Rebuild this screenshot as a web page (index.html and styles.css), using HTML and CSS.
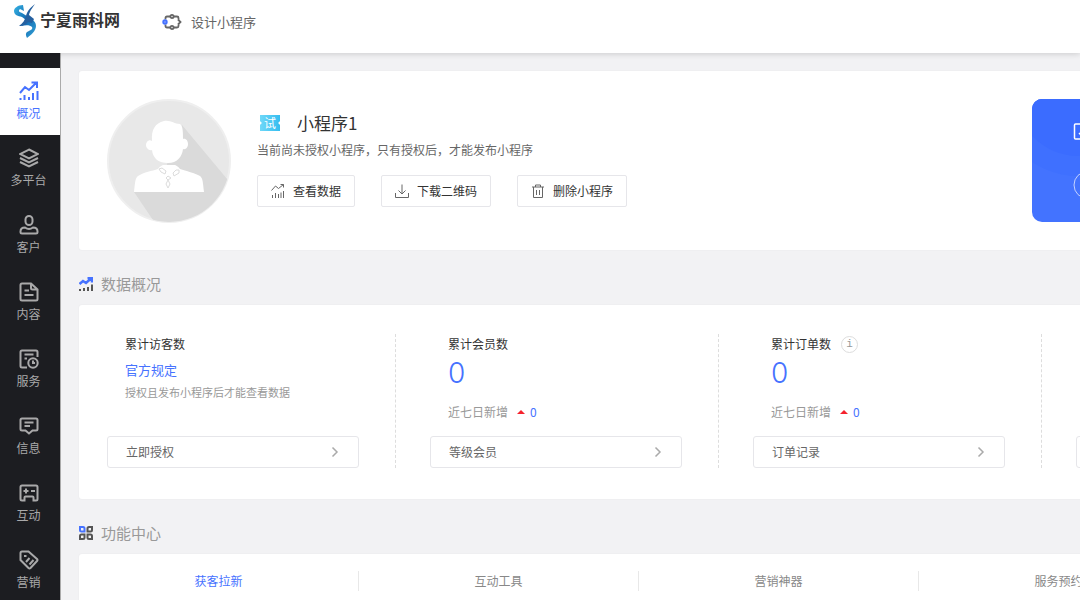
FILE: index.html
```html
<!DOCTYPE html>
<html lang="zh-CN">
<head>
<meta charset="utf-8">
<title>小程序概况</title>
<link rel="stylesheet" href="styles.css">
</head>
<body>
<div class="app">
  <header class="topbar">
    <a class="brand" href="#">
      <svg class="brand-mark" width="26" height="36" viewBox="0 0 26 36">
        <defs><linearGradient id="ribbon" x1="0" y1="0" x2="1" y2="1"><stop offset="0" stop-color="#36b4e4"/><stop offset=".5" stop-color="#1268b0"/><stop offset="1" stop-color="#35a5d8"/></linearGradient></defs>
        <path fill="url(#ribbon)" d="M10 1C5 1 1 4 1 7c0 4 4 5 8 6l4 3-5 6c5-1 9-1 11 1 1 2-1 3-3 4-3 1-4 3-2 7 4-3 9-7 9-12 0-4-3-6-6-8L9 9C6 8 5 7 7 5l4 2z"/>
        <path fill="#2560a0" d="M22 0c-1 2-5 6-6 11l5 4-2 4-4-1c-2 2-4 4-9 4 4-3 6-6 7-10C14 7 18 3 22 0z"/>
      </svg>
      <span class="brand-name">宁夏雨科网</span>
    </a>
    <a class="design-link" href="#">
      <svg width="20" height="16" viewBox="0 0 20 16" fill="none" stroke="#666" stroke-width="1.800">
        <path d="M3.500 5.500V4q0-1.500 1.500-1.500h3M12 2.500h3q1.500 0 1.500 1.500v1.500M16.500 10.500V12q0 1.500-1.500 1.500h-3M8 13.500H5Q3.500 13.500 3.500 12v-1.500"/>
        <circle cx="10" cy="2.500" r="1.600"/><circle cx="10" cy="13.500" r="1.600"/><path d="M16 5.500L18.500 8 16 10.500"/><circle cx="3" cy="8" r="1.800" stroke="#4672ff" fill="#7c9bff"/>
      </svg>
      <span>设计小程序</span>
    </a>
  </header>
  <div class="shell">
    <nav class="sidebar">
      <a class="nav-item active" href="#"><svg class="nav-icon" viewBox="0 0 20 20"><path d="M1 12l5-6 4 3 7-7M12.500 1.500H18V7M1.500 17v2M5.500 14v5M10 16v3M14 12v7M18.500 10v9"/></svg>概况</a>
      <a class="nav-item" href="#"><svg class="nav-icon" viewBox="0 0 20 20"><path d="M10 1.500l9 4.500-9 4.500L1 6zM1 10l9 4.500 9-4.500M1 14l9 4.500 9-4.500"/></svg>多平台</a>
      <a class="nav-item" href="#"><svg class="nav-icon" viewBox="0 0 20 20"><rect x="6.500" y="1" width="7" height="9" rx="3.500"/><path d="M6 12.500q4 3 8 0 4.500 0 4.500 4v.5q0 1.500-1.500 1.500H3q-1.500 0-1.500-1.500v-.5q0-4 4.500-4z"/></svg>客户</a>
      <a class="nav-item" href="#"><svg class="nav-icon" viewBox="0 0 20 20"><path d="M12 1.500H3Q1.500 1.500 1.500 3v14q0 1.500 1.500 1.500h14q1.500 0 1.500-1.500V7.500zM12 1.500V6q0 1.500 1.500 1.500h5M5.500 8.500H10M5.500 13h9"/></svg>内容</a>
      <a class="nav-item" href="#"><svg class="nav-icon" viewBox="0 0 20 20"><path d="M8 18.500H3q-1.500 0-1.500-1.500V3Q1.500 1.500 3 1.500h14q1.500 0 1.500 1.500v5M5.500 5.500h9M5.500 9.500H8"/><circle cx="14" cy="14" r="4.700"/><path d="M14 11.500V14h2"/></svg>服务</a>
      <a class="nav-item" href="#"><svg class="nav-icon" viewBox="0 0 20 20"><path d="M3 2.500h14q1.500 0 1.500 1.500v9q0 1.500-1.500 1.500h-3.500L10 17.500l-3.500-3H3Q1.500 14.500 1.500 13V4Q1.500 2.500 3 2.500zM5.500 6.500h9M5.500 10H11"/></svg>信息</a>
      <a class="nav-item" href="#"><svg class="nav-icon" viewBox="0 0 20 20"><path d="M3 2.500h14q1.500 0 1.500 1.500v12q0 1.500-1.500 1.500h-2.500v-3q0-1-1-1h-7q-1 0-1 1v3H3q-1.500 0-1.500-1.500V4Q1.500 2.500 3 2.500zM4.500 8h5M7 5.500v5M12 8h4"/></svg>互动</a>
      <a class="nav-item" href="#"><svg class="nav-icon" viewBox="0 0 20 20"><path d="M3 1.500h6.500L18 9q1 1 0 2l-6.500 7q-1 1-2 0L1.500 10V3Q1.500 1.500 3 1.500zM5 6h2.500M7 12l3.500-4M10.500 14.500l4-4.500"/></svg>营销</a>
    </nav>
    <main class="content">
      <section class="card profile">
        <svg class="avatar" viewBox="0 0 124 124">
          <defs><clipPath id="disc"><circle cx="62" cy="62" r="61"/></clipPath></defs>
          <circle cx="62" cy="62" r="61" fill="#e8e8e8" stroke="#efefef" stroke-width="2"/>
          <path clip-path="url(#disc)" fill="#dadada" d="M75 26l50 60v38H48L27 93l30-20z"/>
          <path fill="#fff" d="M45 42c-1-11 3-18 12-20 7-1 10 3 16 3 3 2 3 8 3 15 3-1 5 2 5 5s-2 6-5 5c-1 8-6 14-15 14S46 60 45 51c-3 1-6-2-6-5s3-6 6-4z"/>
          <path fill="#fff" d="M27 93c1-8 1-14 4-16 6-4 14-5 20-7 2-3 5-4 5-4h12s3 1 5 4c6 2 15 4 20 7 3 2 3 8 4 16z"/>
          <path fill="none" stroke="#dcdcdc" d="M52 70l3-1 4 3-1 3-4-2zM72 71l-3 0-3 3 1 3 5-3zM59 79l2-2 3 2-3 2zM61 81l2 4-2 4-2-4z"/>
        </svg>
        <div class="profile-info">
          <div class="profile-head">
            <span class="trial-badge">试</span>
            <h1 class="profile-title">小程序1</h1>
          </div>
          <p class="profile-desc">当前尚未授权小程序，只有授权后，才能发布小程序</p>
          <div class="actions">
            <button class="action" type="button"><svg class="action-icon" viewBox="0 0 14 14"><path d="M.5 6.500L4.500 2l3 2.500 5-4M9.500.5h3v3M1.500 11v3M4.500 9v5M7.500 10v4M10 8.500V14M12.500 7v7"/></svg>查看数据</button>
            <button class="action" type="button"><svg class="action-icon" viewBox="0 0 14 14"><path d="M7 .5v9M3.500 6.500L7 10l3.500-3.500M.5 9v4.500h13V9"/></svg>下载二维码</button>
            <button class="action" type="button"><svg class="action-icon" viewBox="0 0 14 14"><path d="M1 3h12M4.500 3V1h5v2M2.500 3v10.500h9V3M5.500 6v5M8.500 6v5"/></svg>删除小程序</button>
          </div>
        </div>
        <div class="promo">
          <svg class="promo-art" viewBox="0 0 120 123">
            <circle cx="46" cy="-5" r="82" fill="#3f70ff"/><circle cx="46" cy="-5" r="62" fill="#3b6cff"/>
            <rect x="42.500" y="25" width="15" height="15" rx="1" fill="none" stroke="#fff" stroke-width="1.500"/>
            <path d="M47 34l3 3 6-6" fill="none" stroke="#fff" stroke-width="1.500"/>
            <path d="M110 72.500H55.500a13.500 13.500 0 0 0 0 27H110" fill="none" stroke="#c5d3ff"/>
          </svg>
        </div>
      </section>

      <h2 class="section-title"><svg class="section-icon" viewBox="0 0 14 14" fill="none" stroke-width="2"><path stroke="#4672ff" stroke-width="2.500" d="M.5 7L4 4l3 2 5-4.500M8.500 1H13v4.500"/><path stroke="#555" d="M1 12v2M5 11v3M9 10v4M13 7.500V14"/></svg>数据概况</h2>
      <section class="card metrics">
        <article class="metric">
          <h3 class="metric-title">累计访客数</h3>
          <a class="metric-link" href="#">官方规定</a>
          <p class="metric-note">授权且发布小程序后才能查看数据</p>
          <button class="metric-button" type="button">立即授权<svg class="chevron" viewBox="0 0 8 12"><path d="M1.500 1.500L6 6l-4.500 4.500"/></svg></button>
        </article>
        <article class="metric">
          <h3 class="metric-title">累计会员数</h3>
          <p class="metric-value">0</p>
          <p class="metric-recent">近七日新增<i class="rise"></i><b class="recent-count">0</b></p>
          <button class="metric-button" type="button">等级会员<svg class="chevron" viewBox="0 0 8 12"><path d="M1.500 1.500L6 6l-4.500 4.500"/></svg></button>
        </article>
        <article class="metric">
          <h3 class="metric-title">累计订单数<span class="info">i</span></h3>
          <p class="metric-value">0</p>
          <p class="metric-recent">近七日新增<i class="rise"></i><b class="recent-count">0</b></p>
          <button class="metric-button" type="button">订单记录<svg class="chevron" viewBox="0 0 8 12"><path d="M1.500 1.500L6 6l-4.500 4.500"/></svg></button>
        </article>
        <article class="metric">
          <button class="metric-button" type="button"></button>
        </article>
      </section>

      <h2 class="section-title"><svg class="section-icon" viewBox="0 0 14 14" fill="none" stroke="#555" stroke-width="2"><path stroke="#4672ff" d="M1 1h3q1.500 0 1.500 1.500v3h-3Q1 5.500 1 4z"/><path d="M13 1h-3Q8.500 1 8.500 2.500v3h3Q13 5.500 13 4zM1 13V10q0-1.500 1.500-1.500h3v3Q5.500 13 4 13zM13 13V10q0-1.500-1.500-1.500h-3v3q0 1.500 1.500 1.500z"/></svg>功能中心</h2>
      <section class="card tabs">
        <button class="tab selected" type="button">获客拉新</button>
        <button class="tab" type="button">互动工具</button>
        <button class="tab" type="button">营销神器</button>
        <button class="tab" type="button">服务预约</button>
      </section>
    </main>
  </div>
</div>
</body>
</html>
```
FILE: styles.css
```css
* { box-sizing: border-box; }
body {
  margin: 0;
  font-family: "Noto Sans CJK SC", "Open Sans", sans-serif;
  font-size: 12px;
  line-height: 20px;
  color: #333;
  background: #f2f2f4;
}
h1, h2, h3, p { margin: 0; font-weight: 400; }
a { color: inherit; text-decoration: none; }
button { font: inherit; color: inherit; cursor: pointer; }

.app { height: 100vh; display: flex; flex-direction: column; overflow: hidden; }

.topbar {
  flex: none;
  height: 53px;
  display: flex;
  align-items: flex-start;
  gap: 42px;
  padding: 4px 13px;
  background: #fff;
  box-shadow: 0 1px 6px rgba(0, 0, 0, .16);
  z-index: 1;
}
.brand { display: flex; align-items: center; height: 36px; gap: 1px; }
.brand-name {
  font-family: "Liberation Serif", "Noto Sans CJK SC", serif;
  font-size: 16px;
  font-weight: 700;
  line-height: 20px;
  padding-bottom: 3px;
  color: #333;
}
.design-link { display: flex; align-items: center; gap: 9px; height: 35px; font-size: 13px; color: #666; }

.shell { flex: 1; min-height: 0; display: flex; }
.sidebar { flex: none; width: 61px; padding-top: 15px; background: #1c1d21; border-right: 1px solid #aaa; overflow: hidden; }
.nav-item {
  height: 67px;
  display: flex;
  flex-direction: column;
  align-items: center;
  padding: 13px 3px 0 0;
  gap: 2px;
  color: #a9a9aa;
}
.nav-item.active { background: #fff; color: #4672ff; }
.nav-icon { width: 20px; height: 20px; fill: none; stroke: currentColor; stroke-width: 2; }

.content { flex: 1; min-width: 0; overflow: hidden; padding: 18px 18px 0; }
.card { min-width: 1400px; background: #fff; border-radius: 3px; box-shadow: 0 0 2px rgba(0, 0, 0, .06); }

.profile { display: flex; align-items: flex-start; gap: 26px; padding: 28px 28px 27px; }
.avatar { flex: none; width: 124px; height: 124px; }
.profile-info { padding-top: 12px; }
.profile-head { display: flex; align-items: center; gap: 17px; height: 24px; padding-left: 3px; }
.trial-badge {
  width: 20px;
  height: 16px;
  font-size: 12px;
  line-height: 16px;
  text-align: center;
  color: #fff;
  background: radial-gradient(circle at 0 50%, #fff 1px, transparent 2px), radial-gradient(circle at 100% 50%, #fff 1px, transparent 2px), linear-gradient(90deg, #6fd8f8, #35bdf0);
}
.profile-title { font-size: 17px; line-height: 24px; }
.profile-desc { margin-top: 5px; color: #666; }
.actions { display: flex; gap: 26px; margin-top: 15px; }
.action {
  display: flex;
  align-items: center;
  gap: 8px;
  height: 32px;
  padding: 0 13px;
  background: #fff;
  border: 1px solid #e6e6ea;
  border-radius: 2px;
}
.action-icon { width: 14px; height: 14px; fill: none; stroke: #666; stroke-width: 1; }
.promo {
  width: 419px;
  height: 123px;
  margin-left: auto;
  border-radius: 10px;
  background: #4373ff;
  overflow: hidden;
}
.promo-art { display: block; width: 120px; height: 123px; }

.section-title {
  display: flex;
  align-items: center;
  gap: 8px;
  height: 55px;
  padding-top: 12px;
  font-size: 15px;
  color: #999;
}
.section-icon { width: 14px; height: 14px; }

.metrics { display: grid; grid-template-columns: repeat(4, 289px); gap: 34px; padding: 29px 28px 31px; }
.metric {
  display: flex;
  flex-direction: column;
  align-items: flex-start;
  min-height: 134px;
  padding-right: 36px;
  border-right: 1px dashed #ddd;
}
.metric-title, .metric-link, .metric-note, .metric-value, .metric-recent { margin-left: 18px; }
.metric-title { display: flex; align-items: center; gap: 10px; font-size: 12px; }
.metric-link { margin-top: 6px; font-size: 13px; color: #4672ff; }
.metric-note { margin-top: 2px; font-size: 11px; color: #999; }
.metric-value { font-family: Inter, "Open Sans", sans-serif; font-weight: 300; font-size: 28px; line-height: 38px; color: #4672ff; }
.metric-recent { display: flex; align-items: center; margin-top: 10px; color: #999; }
.rise { margin: 0 5px 0 9px; border: 4px solid transparent; border-top: 0; border-bottom: 4px solid #f5222d; }
.recent-count { font-weight: 400; color: #4672ff; }
.info {
  width: 17px;
  height: 17px;
  border: 1px solid #ddd;
  border-radius: 50%;
  font-family: "Liberation Mono", monospace;
  font-size: 11px;
  line-height: 15px;
  text-align: center;
  color: #999;
}
.metric-button {
  display: flex;
  align-items: center;
  justify-content: space-between;
  width: 100%;
  height: 32px;
  margin-top: auto;
  padding: 0 19px 0 18px;
  background: #fff;
  border: 1px solid #e6e6ea;
  border-radius: 3px;
  color: #666;
}
.chevron { width: 8px; height: 12px; fill: none; stroke: #aaa; stroke-width: 1.5; }

.tabs { display: grid; grid-template-columns: repeat(5, 1fr); padding: 17px 0; }
.tab { height: 20px; padding: 0; background: none; border: 0; border-right: 1px solid #e8e8e8; color: #888; }
.tab.selected { color: #4672ff; }
```
